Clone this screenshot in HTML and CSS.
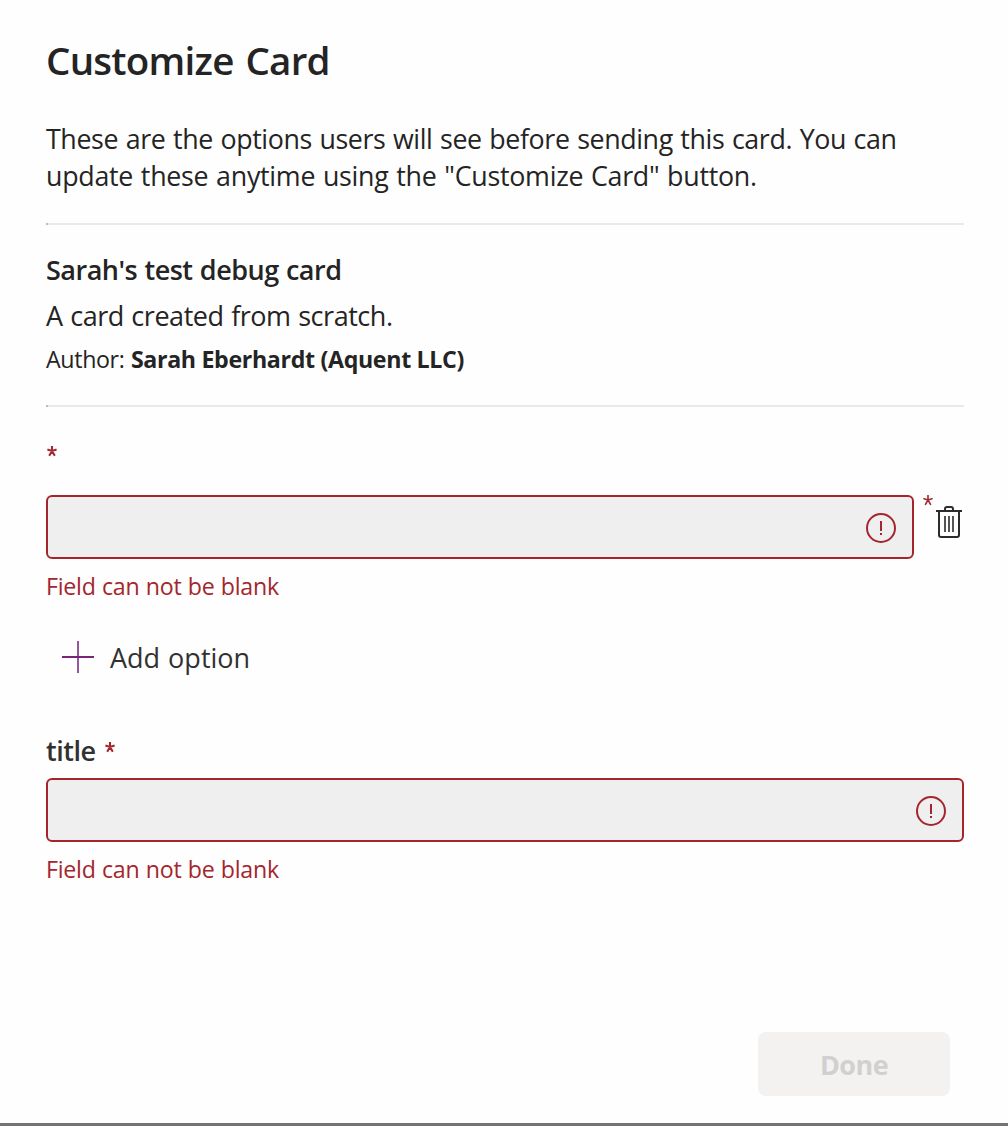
FILE: index.html
```html
<!DOCTYPE html>
<html lang="en">
<head>
<meta charset="utf-8">
<title>Customize Card</title>
<link rel="stylesheet" href="styles.css">
</head>
<body>
<main class="dialog">
  <h1 class="heading">Customize Card</h1>
  <p class="intro">These are the options users will see before sending this card. You can<br><span class="intro-end">update these anytime using the "Customize Card" button.</span></p>
  <div class="rule"></div>
  <h2 class="card-name">Sarah's test debug card</h2>
  <p class="card-desc">A card created from scratch.</p>
  <p class="author"><span>Author:</span><strong>Sarah Eberhardt (Aquent LLC)</strong></p>
  <div class="rule rule-second"></div>

  <div class="option-label"><svg class="star" viewBox="0 0 10 11"><path d="M5 0v5M.4 3.6 5 5l4.6-1.4M2.2 9.8 5 5l2.8 4.8"/></svg></div>
  <div class="option-row">
    <div class="input">
      <svg class="error-icon" viewBox="0 0 30 30"><circle cx="15" cy="15" r="14"/><path d="M15 8v10M15 20v2"/></svg>
    </div>
    <svg class="star star-thin" viewBox="0 0 10 11"><path d="M5 0v5M.4 3.6 5 5l4.6-1.4M2.2 9.8 5 5l2.8 4.8"/></svg>
    <svg class="trash" viewBox="0 0 26 32"><path class="bars" d="M9 10v16M13 10v16M17 10v16"/><path d="M0 5h26M9 5V3q0-2 2-2h4q2 0 2 2v2"/><path d="M3 5v24q0 2 2 2h16q2 0 2-2V5"/></svg>
  </div>
  <p class="error">Field can not be blank</p>

  <div class="add"><svg class="plus" viewBox="0 0 32 32"><path class="plus-v" d="M16 0v32"/><path d="M0 16h32"/></svg><span class="add-text">Add option</span></div>

  <div class="title-label"><span class="title-text">title</span><svg class="star" viewBox="0 0 10 11"><path d="M5 0v5M.4 3.6 5 5l4.6-1.4M2.2 9.8 5 5l2.8 4.8"/></svg></div>
  <div class="input">
    <svg class="error-icon" viewBox="0 0 30 30"><circle cx="15" cy="15" r="14"/><path d="M15 8v10M15 20v2"/></svg>
  </div>
  <p class="error">Field can not be blank</p>
  <div class="footer"><button class="done" disabled>Done</button></div>
</main>
</body>
</html>
```

FILE: styles.css
```css
* { box-sizing: border-box; }
body {
  margin: 0;
  background: #fefefe;
  color: #242424;
  font-family: "Open Sans", "Noto Sans", sans-serif;
}
h1, h2, p { margin: 0; }
svg { display: block; fill: none; flex: none; }
.dialog {
  display: flex;
  flex-direction: column;
  height: 1126px;
  padding: 34px 44px 27px 46px;
  border-bottom: 3px solid #757373;
  white-space: nowrap;
}
.heading { font-size: 38.5px; line-height: 52px; font-weight: 600; letter-spacing: -.75px; word-spacing: 2.5px; }
.intro { margin-top: 34px; font-size: 26.8px; line-height: 37px; letter-spacing: -.39px; word-spacing: 1px; }
.intro-end { letter-spacing: -.26px; }
.rule { height: 2px; margin-top: 29px; background: #eaeaea; border-left: 2px solid #bdbdbd; }
.rule-second { margin-top: 30px; }
.card-name { margin-top: 26px; font-size: 27px; line-height: 38px; font-weight: 600; letter-spacing: -.5px; word-spacing: .8px; }
.card-desc { margin-top: 8px; font-size: 27px; line-height: 38px; letter-spacing: -.46px; word-spacing: 1px; }
.author { display: flex; gap: 6.4px; margin-top: 8px; font-size: 23.2px; line-height: 32px; letter-spacing: -.34px; }
.author strong { font-weight: 700; }

.star { width: 10px; height: 11px; stroke: #a4262c; stroke-width: 2.1; }
.star-thin { margin-left: 9px; stroke-width: 1.6; }
.option-label { height: 88px; padding: 39px 0 0 1px; }
.option-row { display: flex; align-items: flex-start; }
.input {
  display: flex;
  align-items: center;
  justify-content: flex-end;
  height: 64px;
  padding: 2px 16px 0 0;
  border: 2px solid #a4262c;
  border-radius: 6px;
  background: #efefef;
}
.option-row .input { width: 868px; }
.error-icon { width: 30px; height: 30px; stroke: #a4262c; stroke-width: 2; }
.trash { width: 26px; height: 32px; margin: 11px 0 0 3px; stroke: #2c2c2c; stroke-width: 2; }
.trash .bars { stroke: #555; }
.error { margin-top: 11px; font-size: 23.2px; line-height: 32px; letter-spacing: -.26px; word-spacing: .6px; color: #a4262c; }

.add {
  display: flex;
  align-items: center;
  gap: 16px;
  height: 38px;
  margin-top: 36px;
  padding-left: 16px;
  font-size: 27px;
  line-height: 38px;
  color: #323130;
}
.add-text { padding-top: 2px; word-spacing: 1px; }
.plus { width: 32px; height: 32px; stroke-width: 2; stroke: #742774; }
.plus-v { stroke: #95569a; }
.title-label {
  display: flex;
  gap: 10px;
  height: 38px;
  margin: 56px 0 8px;
  font-size: 27px;
  line-height: 38px;
  font-weight: 600;
  color: #323130;
}
.title-text { letter-spacing: -.5px; }
.title-label .star { margin-top: 10px; }
.footer { display: flex; justify-content: flex-end; margin-top: auto; padding-right: 14px; }
.done {
  width: 192px;
  height: 64px;
  padding: 1px 0 0;
  border: 0;
  border-radius: 8px;
  background: #f3f2f1;
  color: #d2d0ce;
  font: 700 27px/38px "Open Sans", sans-serif;
  letter-spacing: -.6px;
}
```
